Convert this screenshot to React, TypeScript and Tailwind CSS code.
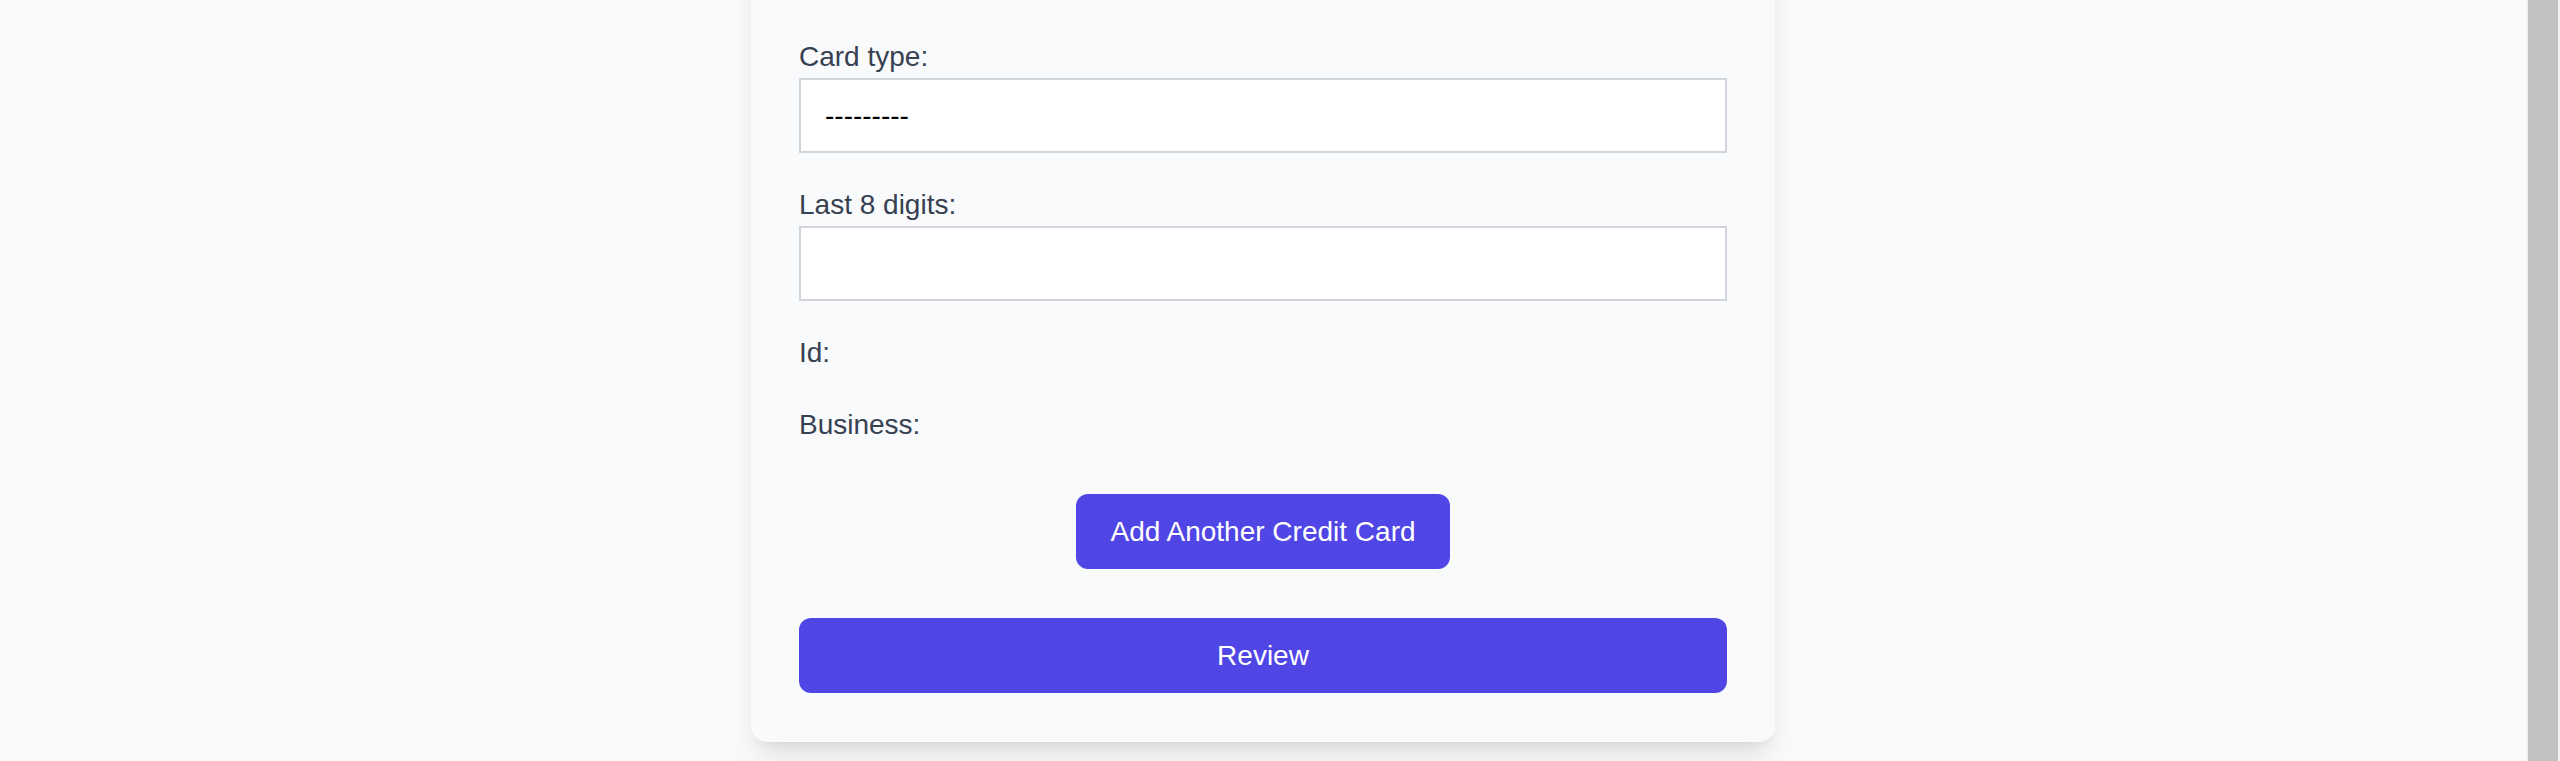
import { useState } from "react";

const Label = ({ children, className = "" }: { children: React.ReactNode; className?: string }) => (
  <label className={`block text-[28px] leading-[42px] text-[#374151] ${className}`}>{children}</label>
);

export default function App() {
  const [cardType, setCardType] = useState("");
  const [digits, setDigits] = useState("");

  return (
    <div className="flex h-[761px] overflow-hidden bg-[#f9fafb] font-['Liberation_Sans',Arial,sans-serif]">
      <main className="flex flex-1 justify-center">
        {/* Form card (top scrolled out of view) */}
        <div className="-mt-[60px] flex h-[802px] w-[1024px] flex-col self-start rounded-[16px] bg-[#f9fafb] px-12 pt-[96px] pb-12 shadow-[0_20px_30px_-6px_rgba(0,0,0,0.1),0_8px_12px_-8px_rgba(0,0,0,0.1)]">
          <Label>Card type:</Label>
          <select
            value={cardType}
            onChange={(e) => setCardType(e.target.value)}
            className="h-[75px] w-full appearance-none rounded-none border-2 border-[#d1d5db] bg-white px-[24px] text-[28px] text-black outline-none"
          >
            <option value="">---------</option>
            <option value="visa">Visa</option>
            <option value="mastercard">Mastercard</option>
            <option value="amex">American Express</option>
          </select>

          <Label className="mt-[31px]">Last 8 digits:</Label>
          <input
            value={digits}
            onChange={(e) => setDigits(e.target.value)}
            className="h-[75px] w-full rounded-none border-2 border-[#d1d5db] bg-white px-[24px] text-[28px] text-black outline-none"
          />

          <Label className="mt-[31px]">Id:</Label>
          <Label className="mt-[30px]">Business:</Label>

          <div className="mt-[48px] flex justify-center">
            <button className="h-[75px] rounded-[12px] bg-[#4f46e5] px-[34px] text-[28px] leading-[42px] text-white">
              Add Another Credit Card
            </button>
          </div>

          <button className="mt-[49px] h-[75px] w-full rounded-[12px] bg-[#4f46e5] text-[28px] leading-[42px] text-white">
            Review
          </button>
        </div>
      </main>

      {/* scrollbar */}
      <div className="w-[34px] bg-[#f1f1f1] px-[2px]">
        <div className="h-full bg-[#c1c1c1]" />
      </div>
    </div>
  );
}
